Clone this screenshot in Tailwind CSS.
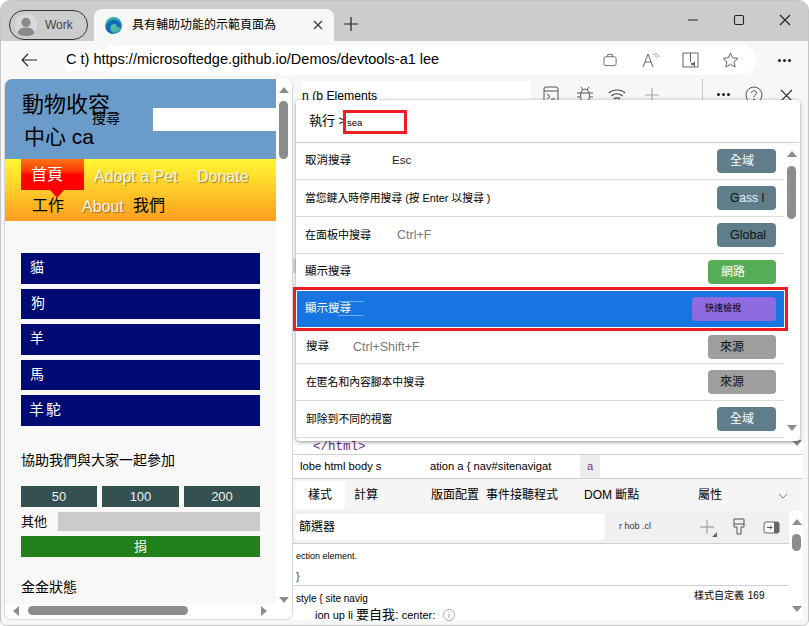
<!DOCTYPE html>
<html lang="zh-Hant">
<head>
  <meta charset="UTF-8" />
  <title>Demo</title>
  <script src="https://cdn.jsdelivr.net/npm/@tailwindcss/browser@4"></script>
</head>
<body class="w-[809px] h-[626px] overflow-hidden bg-white font-['Liberation_Sans','Noto_Sans_CJK_TC',sans-serif] text-black">
<div class="w-[809px] h-[626px] bg-[#f7f7f7] rounded-t-[10px] rounded-b-[6px] border border-[#c4c4c4] overflow-hidden flex flex-col relative">

  <!-- tab strip -->
  <div class="h-[40px] bg-[#cccccc] flex items-end shrink-0 relative">
    <div class="absolute left-[8px] top-[9px] w-[79px] h-[30px] rounded-full border border-[#333] flex items-center pl-[5px] gap-[8px]">
      <svg width="22" height="22" viewBox="0 0 26 26"><circle cx="13" cy="13" r="13" fill="#d9d9d9"/><circle cx="13" cy="10" r="5.500" fill="#8a8a8a"/><path d="M3 23c1-6 6-7 10-7s9 1 10 7c-3 2.500-7 3-10 3s-7-.5-10-3z" fill="#8a8a8a"/></svg>
      <span class="text-[12px] text-[#444]">Work</span>
    </div>
    <div class="ml-[93px] w-[240px] h-[32px] bg-[#f7f7f7] rounded-t-[8px] flex items-center pl-[11px]">
      <svg width="17" height="17" viewBox="0 0 17 17"><defs><linearGradient id="eg" x1="0" y1="0" x2="1" y2="1"><stop offset="0" stop-color="#37c9a0"/><stop offset="1" stop-color="#1a6fd0"/></linearGradient></defs><circle cx="8.500" cy="8.500" r="8.500" fill="url(#eg)"/><path d="M1 10C2 4 7 2 11 3.500c3 1 5 3.500 5 6 0 1.500-2 2-4 1.500 1-2-.5-4-3-4C6 7 4 10 6 14c1 1.500 2 2.500 3 3C4 17 1 14 1 10z" fill="#1565b8"/><path d="M6 9c1-2 5-2.500 6 0 .5 1.500 2.500 2 4 .5-.5 3.500-4 6.500-7 6C6 15 5 12 6 9z" fill="#6fdc8c" opacity=".55"/></svg>
      <span class="text-[12px] ml-[10px] w-[176px] whitespace-nowrap">具有輔助功能的示範頁面為</span>
      <svg width="10" height="10" viewBox="0 0 10 10" class="ml-[5px]"><path d="M1 1l8 8M9 1l-8 8" stroke="#333" stroke-width="1.100"/></svg>
    </div>
    <svg width="16" height="16" viewBox="0 0 16 16" class="ml-[9px] mb-[9px]"><path d="M8 1v14M1 8h14" stroke="#222" stroke-width="1.200"/></svg>
    <div class="ml-auto flex items-center h-[40px] pb-[2px] mr-[17px] gap-[34px]">
      <svg width="12" height="12" viewBox="0 0 12 12"><path d="M1 6h10" stroke="#222" stroke-width="1.100"/></svg>
      <svg width="12" height="12" viewBox="0 0 12 12"><rect x="1.500" y="1.500" width="9" height="9" rx="1.500" fill="none" stroke="#222" stroke-width="1.100"/></svg>
      <svg width="12" height="12" viewBox="0 0 12 12"><path d="M1 1l10 10M11 1L1 11" stroke="#222" stroke-width="1.100"/></svg>
    </div>
  </div>

  <!-- address bar -->
  <div class="h-[38px] flex items-center shrink-0 relative">
    <svg width="16" height="14" viewBox="0 0 16 14" class="ml-[20px] shrink-0"><path d="M16 7H1M7 1L1 7l6 6" fill="none" stroke="#222" stroke-width="1.100"/></svg>
    <div class="ml-[63px] w-[656px] h-[30px] rounded-full bg-white flex items-center shrink-0">
      <span class="text-[14.500px] -ml-[35px] bg-white pl-[1px] whitespace-nowrap w-[420px] shrink-0">C t) https://microsoftedge.github.io/Demos/devtools-a1 lee</span>
      <svg width="15" height="14" viewBox="0 0 16 14" class="ml-[118px] shrink-0"><rect x="1" y="3.500" width="13" height="9.500" rx="2" fill="none" stroke="#666" stroke-width="1"/><path d="M5 3.500V1h5v2.500" fill="none" stroke="#666"/></svg>
      <svg width="18" height="16" viewBox="0 0 18 16" class="ml-[24px] shrink-0"><path d="M1 15L6 2l5 13M3 10h6" fill="none" stroke="#666"/><path d="M11 2c2 .5 3 2 3.500 4M13 1c2 .5 3.500 2 4 4" fill="none" stroke="#888" stroke-width=".8"/></svg>
      <svg width="18" height="16" viewBox="0 0 18 16" class="ml-[22px] shrink-0"><path d="M1 1h15v14H1zM8.500 1v9" fill="none" stroke="#666"/><path d="M9 11h2l2-2v6l-2-2H9z" fill="#666"/></svg>
      <svg width="17" height="16" viewBox="0 0 17 16" class="ml-[22px] shrink-0"><path d="M8.500 1l2.200 4.800 5.300.6-3.900 3.500 1.100 5.100-4.700-2.700-4.700 2.700 1.100-5.100L1 6.400l5.300-.6z" fill="none" stroke="#666"/></svg>
    </div>
    <span class="ml-[22px] flex gap-[2px] shrink-0"><i class="w-[3px] h-[3px] rounded-full bg-[#222]"></i><i class="w-[3px] h-[3px] rounded-full bg-[#222]"></i><i class="w-[3px] h-[3px] rounded-full bg-[#222]"></i></span>
  </div>

  <!-- content -->
  <div class="flex-1 flex pl-[3px] pr-[5px] pb-[5px] min-h-0">
    <!-- page -->
    <div class="w-[289px] h-full rounded-t-[8px] rounded-b-[8px] overflow-hidden bg-white border-x border-b border-[#d8d8d8] flex flex-col shrink-0">
      <div class="flex-1 flex min-h-0">
        <div class="w-[271px] bg-[#f8f8f8] flex flex-col">
          <div class="h-[80px] bg-[#6a9bc9] relative shrink-0">
            <div class="absolute left-[17px] top-[8px] text-[22px] leading-[35px]">動物收容</div>
            <div class="absolute left-[19px] top-[40px] text-[21px] leading-[35px]">中心 ca</div>
            <div class="absolute left-[87px] top-[29px] text-[14px] leading-[20px]">搜尋</div>
            <div class="absolute left-[148px] top-[29px] w-[123px] h-[23px] bg-white"></div>
          </div>
          <div class="h-[62px] bg-linear-to-b from-[#fff733] to-[#fd9d1f] relative shrink-0 text-[16px] text-[#f2f2f2]">
            <div class="absolute left-[16px] top-0 w-[63px] h-[31px] bg-linear-to-b from-[#f97316] to-[#ff0000] to-50% pl-[10px] pt-[6px] leading-[20px] text-white">首頁</div>
            <div class="absolute left-[45px] top-[31px] w-0 h-0 border-x-[7px] border-x-transparent border-t-[8px] border-t-[#ff0000]"></div>
            <div class="absolute left-[89px] top-[8px] leading-[20px] [text-shadow:1px_1px_1px_#0006]">Adopt a Pet</div>
            <div class="absolute left-[192px] top-[8px] leading-[20px] [text-shadow:1px_1px_1px_#0006]">Donate</div>
            <div class="absolute left-[27px] top-[37px] leading-[20px] text-black">工作</div>
            <div class="absolute left-[77px] top-[38px] leading-[20px] [text-shadow:1px_1px_1px_#0006]">About</div>
            <div class="absolute left-[128px] top-[37px] leading-[20px] text-black">我們</div>
          </div>
          <div class="px-[16px] pt-[32px] flex flex-col">
            <div class="flex flex-col gap-[5px] text-[14px] text-white">
              <div class="h-[31px] bg-[#000a74] flex items-center pl-[9px] pb-[2px]">貓</div>
              <div class="h-[30px] bg-[#000a74] flex items-center pl-[10px] pb-[1px]">狗</div>
              <div class="h-[31px] bg-[#000a74] flex items-center pl-[9px] pb-[2px]">羊</div>
              <div class="h-[30px] bg-[#000a74] flex items-center pl-[9px] pb-[2px]">馬</div>
              <div class="h-[31px] bg-[#000a74] flex items-center pl-[8px] tracking-[2px] text-[15px]">羊駝</div>
            </div>
            <div class="mt-[23px] text-[14px] leading-[22px] whitespace-nowrap">協助我們與大家一起參加</div>
            <div class="mt-[15px] flex gap-[5px] text-[13px] text-[#f2f2f2]">
              <div class="w-[76px] h-[21px] bg-[#345051] flex items-center justify-center">50</div>
              <div class="w-[77px] h-[21px] bg-[#345051] flex items-center justify-center">100</div>
              <div class="w-[76px] h-[21px] bg-[#345051] flex items-center justify-center">200</div>
            </div>
            <div class="mt-[5px] flex items-center h-[19px] text-[13px]">
              <span class="w-[37px]">其他</span>
              <div class="flex-1 h-[19px] bg-[#cbcbcb]"></div>
            </div>
            <div class="mt-[5px] h-[21px] bg-[#20801a] text-white text-[13px] flex items-center justify-center">捐</div>
            <div class="mt-[19px] text-[14px] leading-[22px]">金金狀態</div>
          </div>
        </div>
        <!-- page v scrollbar -->
        <div class="w-[16px] bg-white relative shrink-0">
          <div class="absolute left-[3px] top-[8px] w-0 h-0 border-x-[5px] border-x-transparent border-b-[6px] border-b-[#8d8d8d]"></div>
          <div class="absolute left-[3px] top-[22px] w-[9px] h-[58px] rounded-full bg-[#8d8d8d]"></div>
          <div class="absolute left-[3px] bottom-[1px] w-0 h-0 border-x-[5px] border-x-transparent border-t-[6px] border-t-[#8d8d8d]"></div>
        </div>
      </div>
      <div class="h-[15px] bg-white relative shrink-0">
        <div class="absolute left-[8px] top-[2px] w-0 h-0 border-y-[5px] border-y-transparent border-r-[6px] border-r-[#8d8d8d]"></div>
        <div class="absolute left-[23px] top-[2px] w-[160px] h-[9px] rounded-full bg-[#8d8d8d]"></div>
        <div class="absolute left-[256px] top-[2px] w-0 h-0 border-y-[5px] border-y-transparent border-l-[6px] border-l-[#8d8d8d]"></div>
      </div>
    </div>

    <!-- devtools -->
    <div class="flex-1 flex flex-col relative min-w-0">
      <!-- devtools toolbar -->
      <div class="h-[21px] flex items-start relative shrink-0 overflow-visible">
        <span class="text-[12.200px] ml-[9px] mt-[2px] leading-[19px] pt-[6px] whitespace-nowrap bg-white w-[229px] h-[25px] relative z-0">n (b Elements</span>
        <svg width="16" height="18" viewBox="0 0 16 18" class="absolute left-[250px] top-[7px]"><rect x="1" y="1" width="14" height="16" rx="2" fill="none" stroke="#555"/><path d="M1 5h14M4 8l3 2.500L4 13M8 13h4" fill="none" stroke="#555"/></svg>
        <svg width="18" height="18" viewBox="0 0 18 18" class="absolute left-[283px] top-[7px]"><ellipse cx="9" cy="10" rx="4.500" ry="7" fill="none" stroke="#555"/><path d="M5 7h8M5 1l2 3M13 1l-2 3M1 7h4M1 11h3M1 16l3-2M17 7h-4M17 11h-3M17 16l-3-2" fill="none" stroke="#555"/></svg>
        <svg width="18" height="16" viewBox="0 0 18 16" class="absolute left-[315px] top-[9px]"><path d="M1 5c4-4 12-4 16 0M3.500 8c3-3 8-3 11 0M6 11c1.500-1.500 4.500-1.500 6 0" fill="none" stroke="#444" stroke-width="1.200"/><circle cx="9" cy="14" r="1.500" fill="#333"/></svg>
        <svg width="16" height="16" viewBox="0 0 16 16" class="absolute left-[351px] top-[8px]"><path d="M8 1v14M1 8h14" stroke="#aaa" stroke-width="1.200"/></svg>
        <div class="absolute left-[409px] top-0 w-px h-[25px] bg-[#c8c8c8]"></div>
        <span class="absolute left-[424px] top-[14px] flex gap-[2px]"><i class="w-[3px] h-[3px] rounded-full bg-[#222]"></i><i class="w-[3px] h-[3px] rounded-full bg-[#222]"></i><i class="w-[3px] h-[3px] rounded-full bg-[#222]"></i></span>
        <svg width="18" height="18" viewBox="0 0 18 18" class="absolute left-[452px] top-[7px]"><circle cx="9" cy="9" r="8" fill="none" stroke="#555"/><path d="M6.500 7c0-3 5-3 5 0 0 2-2.500 2-2.500 4" fill="none" stroke="#555"/><circle cx="9" cy="13.500" r="1" fill="#555"/></svg>
        <svg width="13" height="13" viewBox="0 0 13 13" class="absolute left-[487px] top-[10px]"><path d="M1 1l11 11M12 1L1 12" stroke="#333" stroke-width="1.100"/></svg>
      </div>

      <!-- area behind palette -->
      <div class="flex-1 bg-white flex flex-col min-h-0">
        <div class="h-[335px] shrink-0"></div>
        <div class="h-[20px] shrink-0 pt-[5px] pl-[20px] font-['Liberation_Mono',monospace] text-[12.500px] leading-[14px] text-[#6a2c91] border-b border-[#d0d0d0] relative">&lt;/html&gt;
          <div class="absolute right-[1px] top-[5px] w-0 h-0 border-x-[5px] border-x-transparent border-t-[6px] border-t-[#8d8d8d]"></div>
        </div>
        <div class="h-[24px] shrink-0 flex items-center text-[11.200px] border-b border-[#d0d0d0] whitespace-nowrap">
          <span class="ml-[7px] w-[130px]">lobe html body s</span>
          <span class="w-[150px]">ation a { nav#sitenavigat</span>
          <span class="w-[20px] h-full bg-[#ececec] text-[#7a2a9c] flex items-center justify-center">a</span>
        </div>
        <div class="h-[32px] shrink-0 bg-[#f5f5f5] flex items-start text-[12px] leading-[18px] whitespace-nowrap">
          <span class="ml-[2px] mt-[2px] w-[50px] h-[28px] bg-white rounded-[3px] flex items-center justify-center">樣式</span>
          <span class="ml-[9px] mt-[7px] w-[77px]">計算</span>
          <span class="mt-[7px] w-[55px]">版面配置</span>
          <span class="mt-[7px] w-[98px]">事件接聽程式</span>
          <span class="mt-[7px] w-[114px]">DOM 斷點</span>
          <span class="mt-[7px] w-[80px]">屬性</span>
          <svg width="10" height="6" viewBox="0 0 10 6" class="mt-[14px] shrink-0"><path d="M1 1l4 4 4-4" fill="none" stroke="#888"/></svg>
        </div>
        <div class="flex-1 flex min-h-0">
          <div class="flex-1 min-w-0 flex flex-col">
            <div class="h-[33px] bg-[#f0f0f0] border-b border-[#cfcfcf] flex items-center shrink-0 relative">
              <div class="ml-[2px] w-[310px] h-[26px] bg-white rounded-[3px] flex items-center pl-[4px] text-[12px]">篩選器</div>
              <span class="ml-[14px] text-[9px] text-[#333] whitespace-nowrap">r hob .cl</span>
              <svg width="18" height="18" viewBox="0 0 18 18" class="absolute left-[407px] top-[8px]"><path d="M7 1v14M0 8h14" stroke="#aaa" stroke-width="1.300"/><path d="M17 13v5h-5z" fill="#666"/></svg>
              <svg width="12" height="17" viewBox="0 0 12 17" class="absolute left-[440px] top-[7px]"><path d="M1 1h10v8H8v7H4V9H1zM1 6h10" fill="none" stroke="#555"/></svg>
              <svg width="17" height="13" viewBox="0 0 17 13" class="absolute left-[470px] top-[10px]"><rect x="1" y="1" width="15" height="11" rx="2" fill="#fff" stroke="#666"/><rect x="11" y="1" width="5" height="11" fill="#666"/><path d="M4 6.500h5M7 4.500l2 2-2 2" fill="none" stroke="#555"/></svg>
            </div>
            <div class="h-[42px] border-b border-[#d0d0d0] shrink-0 bg-white text-[9px] pl-[3px] pt-[6px] leading-[12px]">ection element.
              <div class="mt-[8px] text-[11px] leading-[12px] text-[#444]">}</div>
            </div>
            <div class="flex-1 bg-white relative whitespace-nowrap">
              <span class="absolute left-[3px] top-[5px] text-[10px]">style { site navig</span>
              <span class="absolute left-[401px] top-[2px] text-[10px]">樣式自定義 <span class="ml-[1px]">169</span></span>
              <span class="absolute left-[22px] top-[23px] text-[11px] leading-[12px]">ion up li <span class="text-[13px]">要自我:</span> center:</span>
              <svg width="12" height="12" viewBox="0 0 12 12" class="absolute left-[150px] top-[23px]"><circle cx="6" cy="6" r="5.500" fill="none" stroke="#aaa"/><path d="M6 5v4M6 3v1" stroke="#aaa"/></svg>
            </div>
          </div>
          <div class="w-[14px] shrink-0 bg-white relative">
            <div class="absolute left-[3px] top-[8px] w-0 h-0 border-x-[5px] border-x-transparent border-b-[6px] border-b-[#8d8d8d]"></div>
            <div class="absolute left-[3px] top-[23px] w-[9px] h-[17px] rounded-full bg-[#8d8d8d]"></div>
            <div class="absolute left-[3px] top-[95px] w-0 h-0 border-x-[5px] border-x-transparent border-t-[6px] border-t-[#8d8d8d]"></div>
          </div>
        </div>
      </div>

      <!-- small mark left of palette -->
      <div class="absolute left-0 top-[180px] w-[3px] h-[14px] bg-[#dedede]"></div>

      <!-- command palette -->
      <div class="absolute left-[3px] top-[21px] w-[504px] h-[341px] bg-white rounded-[4px] shadow-[0_1px_4px_rgba(0,0,0,.45)] flex flex-col z-10">
        <div class="h-[43px] border-b border-[#cfcfcf] mr-[1px] flex items-center shrink-0 pl-[13px] text-[13px] relative">
          <span>執行 &gt;</span>
          <div class="absolute left-[47px] top-[10px] w-[64px] h-[24px] border-[3px] border-[#ee1c25] text-[9.500px] leading-[20px] pl-[1px]">sea</div>
        </div>
        <div class="flex-1 flex flex-col mr-[16px] min-h-0 relative">
          <div class="h-[37px] border-b border-[#dcdcdc] flex items-center pl-[9px] text-[11.500px] shrink-0">
            <span class="w-[87px]">取消搜尋</span><span class="text-[11.500px] text-[#222]">Esc</span>
            <span class="ml-auto mr-[8px] w-[59px] h-[24px] rounded-[4px] bg-[#607d8b] text-white text-[12px] flex items-center pl-[13px]">全域</span>
          </div>
          <div class="h-[37px] border-b border-[#dcdcdc] flex items-center pl-[9px] text-[10.800px] shrink-0 whitespace-nowrap">
            <span>當您鍵入時停用搜尋 (按 Enter 以搜尋 )</span>
            <span class="ml-auto mr-[8px] w-[59px] h-[24px] rounded-[4px] bg-[#607d8b] text-[#f1f1f1] text-[12px] flex items-center pl-[13px]"><span class="text-[#111]">G</span>ass&nbsp;<span class="text-[#111]">I</span></span>
          </div>
          <div class="h-[37px] border-b border-[#dcdcdc] flex items-center pl-[9px] text-[11px] shrink-0">
            <span class="w-[92px]">在面板中搜尋</span><span class="text-[12.500px] text-[#777]">Ctrl+F</span>
            <span class="ml-auto mr-[8px] w-[59px] h-[24px] rounded-[4px] bg-[#607d8b] text-[#111] text-[12.500px] flex items-center pl-[13px]">Global</span>
          </div>
          <div class="h-[33px] pt-[2px] flex items-center pl-[9px] text-[11.500px] shrink-0">
            <span>顯示搜尋</span>
            <span class="ml-auto mr-[8px] w-[68px] h-[24px] rounded-[4px] bg-[#57ad57] text-white text-[12px] flex items-center pl-[13px]">網路</span>
          </div>
          <div class="h-[44px] -ml-[3px] w-[495px] border-[3px] border-[#ee1c25] shrink-0 relative z-10">
            <div class="h-full bg-[#1675e0] border border-white flex items-center pl-[8px] text-[11.500px] text-white relative">
              <span>顯示搜尋</span>
              <div class="absolute left-[41px] top-[10px] w-[26px] h-px bg-white/40"></div>
              <div class="absolute left-[41px] top-[24px] w-[26px] h-px bg-white/40"></div>
              <span class="absolute left-[395px] top-[6px] w-[84px] h-[24px] rounded-[4px] bg-[#8f6ae0] text-black text-[9px] flex items-center pl-[13px]">快速檢視</span>
            </div>
          </div>
          <div class="h-[33px] border-b border-[#dcdcdc] flex items-center pl-[10px] text-[11.500px] shrink-0">
            <span class="w-[47px]">搜尋</span><span class="text-[12.500px] text-[#777]">Ctrl+Shift+F</span>
            <span class="ml-auto mr-[8px] w-[68px] h-[24px] rounded-[4px] bg-[#9e9e9e] text-[#111] text-[12px] flex items-center pl-[12px]">來源</span>
          </div>
          <div class="h-[37px] border-b border-[#dcdcdc] flex items-center pl-[10px] text-[10.800px] shrink-0">
            <span>在匿名和內容腳本中搜尋</span>
            <span class="ml-auto mr-[8px] w-[68px] h-[24px] rounded-[4px] bg-[#9e9e9e] text-[#111] text-[12px] flex items-center pl-[12px]">來源</span>
          </div>
          <div class="h-[37px] border-b border-[#dcdcdc] flex items-center pl-[10px] text-[10.800px] shrink-0">
            <span>卸除到不同的視窗</span>
            <span class="ml-auto mr-[8px] w-[59px] h-[24px] rounded-[4px] bg-[#607d8b] text-white text-[12px] flex items-center pl-[13px]">全域</span>
          </div>
        </div>
        <div class="absolute right-[3px] top-[51px] w-0 h-0 border-x-[5px] border-x-transparent border-b-[6px] border-b-[#8d8d8d]"></div>
        <div class="absolute right-[4px] top-[66px] w-[9px] h-[53px] rounded-full bg-[#8d8d8d]"></div>
        <div class="absolute right-[3px] top-[325px] w-0 h-0 border-x-[5px] border-x-transparent border-t-[6px] border-t-[#8d8d8d]"></div>
      </div>
    </div>
  </div>
</div>
</body>
</html>
